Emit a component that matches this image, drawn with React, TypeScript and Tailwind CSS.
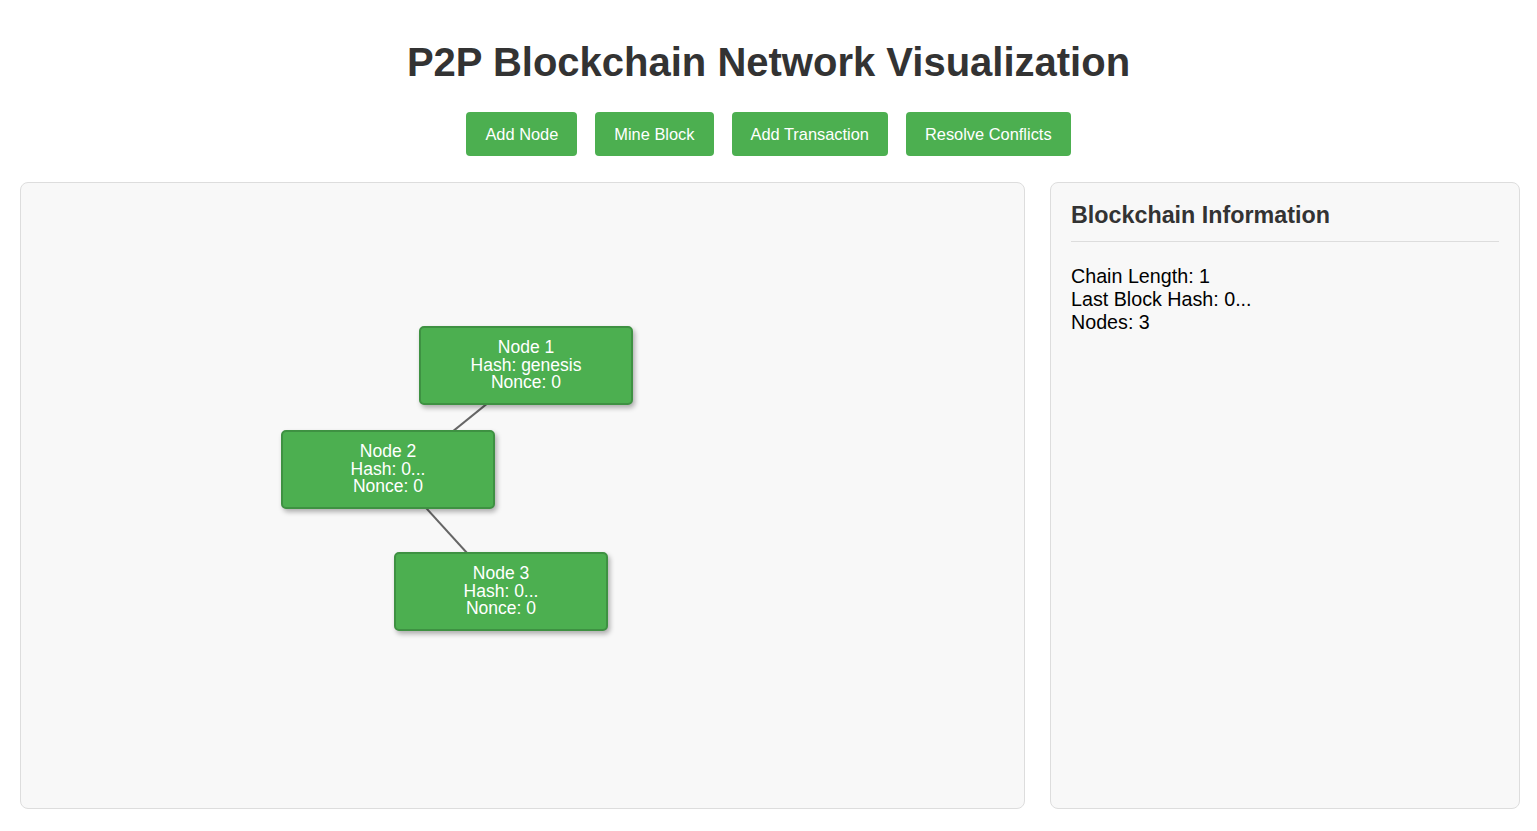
import React from "react";

type ChainNode = { id: number; hash: string; nonce: number; x: number; y: number };

const nodes: ChainNode[] = [
  { id: 1, hash: "genesis", nonce: 0, x: 399, y: 144 },
  { id: 2, hash: "0...", nonce: 0, x: 261, y: 248 },
  { id: 3, hash: "0...", nonce: 0, x: 374, y: 370 },
];

// link endpoints, panel coordinates
const links = [
  { id: "1-2", x1: 512, y1: 183.5, x2: 384, y2: 287 },
  { id: "2-3", x1: 370.5, y1: 287, x2: 482, y2: 409.5 },
];

const NODE_W = 214;
const NODE_H = 79;

const actions = ["Add Node", "Mine Block", "Add Transaction", "Resolve Conflicts"];

export default function App() {
  return (
    <div
      className="min-h-screen bg-white px-5 pb-5 text-[#333]"
      style={{ fontFamily: '"Liberation Sans", Arial, sans-serif' }}
    >
      <h1 className="pt-[34px] text-center text-[40px] font-bold leading-[56px] text-[#333]">
        P2P Blockchain Network Visualization
      </h1>

      <div className="mt-[22px] flex justify-center gap-[18px]">
        {actions.map((label) => (
          <button
            key={label}
            className="rounded-[4px] bg-[#4caf50] px-[19px] py-3 text-[16.4px] leading-5 text-white"
          >
            {label}
          </button>
        ))}
      </div>

      <div className="mt-[26px] flex gap-[25px]">
        <div className="relative h-[627px] w-[1005px] shrink-0 rounded-lg border border-[#ddd] bg-[#f8f8f8]">
          <svg className="absolute left-0 top-0" width="1005" height="627">
            {links.map((l) => (
              <line key={l.id} x1={l.x1} y1={l.y1} x2={l.x2} y2={l.y2} stroke="#666" strokeWidth={2} />
            ))}
          </svg>
          {nodes.map((n) => (
            <div
              key={n.id}
              className="absolute flex flex-col items-center justify-center rounded-[5px] border-2 border-[#3e9142] bg-[#4caf50] text-[17.5px] leading-[17.5px] text-white shadow-[2px_3px_5px_rgba(0,0,0,0.3)]"
              style={{ left: n.x - 1, top: n.y - 1, width: NODE_W, height: NODE_H }}
            >
              <div>Node {n.id}</div>
              <div>Hash: {n.hash}</div>
              <div>Nonce: {n.nonce}</div>
            </div>
          ))}
        </div>

        <div className="h-[627px] w-[470px] shrink-0 rounded-lg border border-[#ddd] bg-[#f8f8f8] px-5 pt-[17px]">
          <h3 className="border-b border-[#ddd] pb-[11px] text-[23.3px] font-bold leading-[30px] text-[#333]">
            Blockchain Information
          </h3>
          <div className="mt-[23px] text-[19.7px] leading-[23px] text-black">
            <div>Chain Length: 1</div>
            <div>Last Block Hash: 0...</div>
            <div>Nodes: 3</div>
          </div>
        </div>
      </div>
    </div>
  );
}
